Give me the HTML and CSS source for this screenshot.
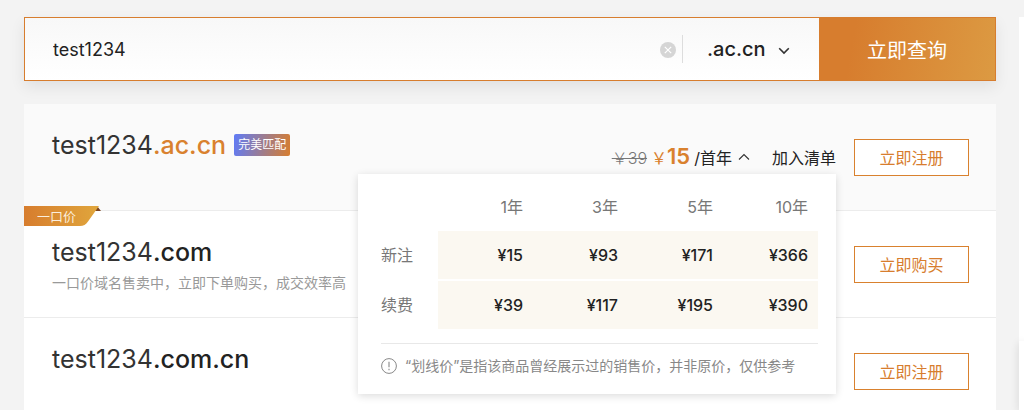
FILE: index.html
```html
<!DOCTYPE html>
<html lang="zh-CN">
<head>
  <meta charset="UTF-8" />
  <meta name="viewport" content="width=device-width, initial-scale=1.0" />
  <title>域名查询</title>
  <link rel="stylesheet" href="styles.css">
</head>
<body>
  <main class="main">
    <form class="search">
      <input class="search-input" type="text" value="test1234" aria-label="域名" />
      <button class="search-clear" type="reset" aria-label="清空">
        <svg width="16" height="16" viewBox="0 0 16 16">
          <circle cx="8" cy="8" r="8" fill="#d5d5d5" />
          <path d="M4.8 4.8l6.4 6.4M11.2 4.8l-6.4 6.4" stroke="#fff" stroke-width="1.2" />
        </svg>
      </button>
      <div class="suffix">
        <select class="suffix-select" aria-label="后缀">
          <option>.ac.cn</option>
          <option>.com</option>
          <option>.com.cn</option>
        </select>
        <svg class="suffix-arrow" width="12" height="8" viewBox="0 0 12 8">
          <path d="M1.2 1.2L6 6l4.800-4.800" fill="none" stroke="#333" stroke-width="1.6" />
        </svg>
      </div>
      <button class="search-btn" type="button">立即查询</button>
    </form>

    <ul class="list">
      <li class="row row-match">
        <div class="info">
          <h2 class="domain">test1234<span class="tld tld-match">.ac.cn</span><span class="tag">完美匹配</span></h2>
        </div>
        <div class="offer">
          <del class="old-price">￥39</del>
          <span class="price">￥<strong>15</strong></span>
          <button class="per-year" type="button">/首年
            <svg width="12" height="8" viewBox="0 0 12 8">
              <path d="M1 6.500l5-5 5 5" fill="none" stroke="#333" stroke-width="1.1" />
            </svg>
          </button>
          <a class="add" href="#">加入清单</a>

          <div class="popup">
            <table class="prices">
              <tr><td></td><th>1年</th><th>3年</th><th>5年</th><th>10年</th></tr>
              <tr><th class="kind">新注</th><td>¥15</td><td>¥93</td><td>¥171</td><td>¥366</td></tr>
              <tr><th class="kind">续费</th><td>¥39</td><td>¥117</td><td>¥195</td><td>¥390</td></tr>
            </table>
            <p class="note">
              <svg width="16" height="16" viewBox="0 0 16 16">
                <circle cx="8" cy="8" r="7.400" fill="none" stroke="#888" />
                <path d="M8 3.800v5.400M8 10.800v1.400" stroke="#888" stroke-width="1.1" />
              </svg>
              <span>“划线价”是指该商品曾经展示过的销售价，并非原价，仅供参考</span>
            </p>
          </div>
        </div>
        <button class="buy" type="button">立即注册</button>
      </li>

      <li class="row">
        <div class="ribbon">
          <svg class="ribbon-bg" width="77" height="20" viewBox="0 0 77 20">
            <defs>
              <linearGradient id="gold">
                <stop offset="0" stop-color="#d77d2e" />
                <stop offset="1" stop-color="#e0a63c" />
              </linearGradient>
            </defs>
            <path d="M73 0l4 5h-7z" fill="#7a4320" />
            <path d="M0 0h75L64 15.500Q61 20 56 20H0z" fill="url(#gold)" />
          </svg>
          <span class="ribbon-text">一口价</span>
        </div>
        <div class="info">
          <h2 class="domain">test1234<span class="tld">.com</span></h2>
          <p class="desc">一口价域名售卖中，立即下单购买，成交效率高</p>
        </div>
        <button class="buy" type="button">立即购买</button>
      </li>

      <li class="row">
        <div class="info">
          <h2 class="domain">test1234<span class="tld">.com.cn</span></h2>
        </div>
        <button class="buy" type="button">立即注册</button>
      </li>
    </ul>
  </main>

  <aside class="side">
    <div class="side-card"></div>
    <div class="side-card side-card-float"></div>
  </aside>
</body>
</html>
```
FILE: styles.css
```css
* {
  box-sizing: border-box;
}
body {
  display: flex;
  gap: 23px;
  height: 100vh;
  margin: 0;
  padding: 17px 0 0 24px;
  overflow: hidden;
  background: #f3f3f3;
  color: #222;
  font-family: Inter, "Noto Sans CJK SC", sans-serif;
  font-size: 16px;
}
h2, p, ul {
  margin: 0;
  padding: 0;
}
button, input, select {
  font-family: inherit;
  color: inherit;
  border: none;
  background: none;
  padding: 0;
}
button {
  cursor: pointer;
}
.main {
  flex: 1;
}

/* search bar */
.search {
  display: flex;
  align-items: center;
  height: 64px;
  border: 1px solid #d77d2e;
  background: linear-gradient(#f8f8f8, #fff);
  box-shadow: 0 6px 14px rgba(0, 0, 0, 0.08);
}
.search-input {
  flex: 1;
  min-width: 0;
  height: 100%;
  padding-left: 28px;
  font-size: 18px;
  outline: none;
}
.search-clear {
  display: flex;
  margin: 2px 6px 0 0;
}
.suffix {
  position: relative;
  width: 137px;
  border-left: 1px solid #ddd;
}
.suffix-select {
  width: 100%;
  height: 28px;
  padding-left: 24px;
  font-size: 20px;
  font-weight: 500;
  appearance: none;
  outline: none;
}
.suffix-arrow {
  position: absolute;
  right: 29px;
  top: 12px;
  pointer-events: none;
}
.search-btn {
  width: 176px;
  height: 100%;
  background: linear-gradient(100deg, #d77d2e 20%, #dc9a42);
  color: #fff;
  font-size: 20px;
}

/* results */
.list {
  margin-top: 23px;
  list-style: none;
}
.row {
  position: relative;
  display: flex;
  align-items: center;
  gap: 18px;
  height: 107px;
  padding: 0 27px 0 28px;
  border-bottom: 1px solid #ececec;
  background: #fff;
}
.row-match {
  background: #fafafa;
}
.info {
  flex: 1;
  align-self: flex-start;
  padding-top: 26px;
}
.domain {
  display: flex;
  align-items: center;
  color: #333;
  font-size: 25px;
  font-weight: 400;
  line-height: 30px;
}
.tld {
  color: #222;
  font-weight: 500;
}
.tld-match {
  color: #d9812e;
}
.tag {
  margin-left: 8px;
  padding: 0 4px;
  border-radius: 2px;
  background: linear-gradient(100deg, #5f7bf7, #d77d2e);
  color: #fff;
  font-size: 12px;
  line-height: 22px;
}
.desc {
  margin-top: 6px;
  color: #999;
  font-size: 14px;
  line-height: 20px;
}
.buy {
  width: 115px;
  height: 37px;
  border: 1px solid #d9812e;
  background: #fff;
  color: #d77d2e;
  font-size: 16px;
}
.offer {
  position: relative;
  display: flex;
  align-items: baseline;
  line-height: 32px;
}
.old-price {
  color: #777;
  font-weight: 300;
}
.price {
  margin: 0 4px;
  color: #d9812e;
}
.price strong {
  font-size: 22px;
  font-weight: 600;
}
.per-year {
  display: flex;
  align-items: center;
  gap: 6px;
  font-size: 16px;
}
.add {
  margin-left: 22px;
  color: inherit;
  text-decoration: none;
}

/* price popup */
.popup {
  position: absolute;
  z-index: 1;
  top: 100%;
  right: 0;
  width: 478px;
  padding: 9px 18px 17px 23px;
  background: #fff;
  box-shadow: 0 2px 8px rgba(0, 0, 0, 0.14);
}
.prices {
  width: 100%;
  border-spacing: 0 2px;
  table-layout: fixed;
  line-height: 24px;
}
.prices th, .prices td {
  height: 48px;
  padding: 0 10px 0 0;
  text-align: right;
  font-weight: 500;
}
.prices td {
  background: #fbf8f1;
}
.prices th {
  color: #777;
  font-weight: 400;
}
.prices tr:first-child th, .prices tr:first-child td {
  height: 44px;
  background: none;
}
.prices tr > :first-child {
  width: 57px;
  padding: 0;
  text-align: left;
}
.note {
  display: flex;
  align-items: center;
  gap: 8px;
  margin-top: 12px;
  padding-top: 11px;
  border-top: 1px solid #e8e8e8;
  color: #888;
  font-size: 14px;
  line-height: 22px;
  white-space: nowrap;
}

/* fixed price ribbon */
.ribbon {
  position: absolute;
  top: -5px;
  left: 0;
  width: 77px;
  height: 20px;
}
.ribbon-bg {
  display: block;
}
.ribbon-text {
  position: absolute;
  top: 0;
  left: 13px;
  color: #fbeedd;
  font-size: 13px;
  line-height: 20px;
}

/* side column */
.side {
  display: flex;
  flex-direction: column;
  width: 5px;
}
.side-card {
  height: 324px;
  background: #fff;
}
.side-card-float {
  flex: 1;
  box-shadow: 0 2px 8px rgba(0, 0, 0, 0.14);
}
```
